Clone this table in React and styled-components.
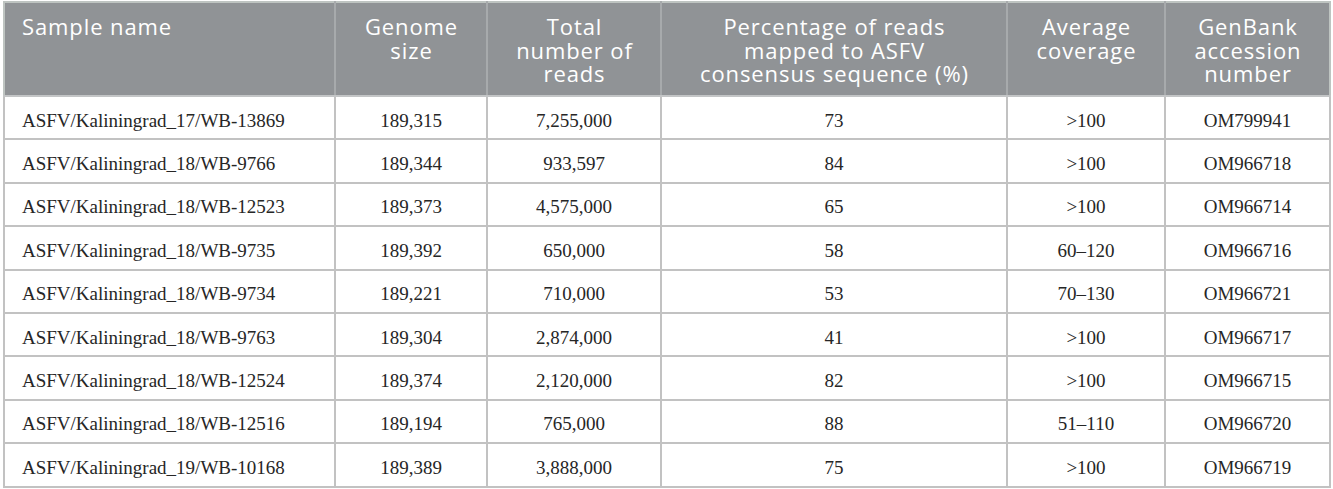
import styled, { createGlobalStyle } from 'styled-components'

const GlobalStyle = createGlobalStyle`
	html, body { margin: 0; padding: 0; background: #fff; }
`

const columns = [
	{ label: 'Sample name', width: 331, align: 'left' },
	{ label: 'Genome size', width: 152 },
	{ label: 'Total number of reads', width: 174 },
	{ label: 'Percentage of reads mapped to ASFV consensus sequence (%)', width: 346 },
	{ label: 'Average coverage', width: 158 },
	{ label: 'GenBank accession number', width: 165 },
]

const headerLines = [
	['Sample name'],
	['Genome', 'size'],
	['Total', 'number of', 'reads'],
	['Percentage of reads', 'mapped to ASFV', 'consensus sequence (%)'],
	['Average', 'coverage'],
	['GenBank', 'accession', 'number'],
]

const rows = [
	['ASFV/Kaliningrad_17/WB-13869', '189,315', '7,255,000', '73', '>100', 'OM799941'],
	['ASFV/Kaliningrad_18/WB-9766', '189,344', '933,597', '84', '>100', 'OM966718'],
	['ASFV/Kaliningrad_18/WB-12523', '189,373', '4,575,000', '65', '>100', 'OM966714'],
	['ASFV/Kaliningrad_18/WB-9735', '189,392', '650,000', '58', '60–120', 'OM966716'],
	['ASFV/Kaliningrad_18/WB-9734', '189,221', '710,000', '53', '70–130', 'OM966721'],
	['ASFV/Kaliningrad_18/WB-9763', '189,304', '2,874,000', '41', '>100', 'OM966717'],
	['ASFV/Kaliningrad_18/WB-12524', '189,374', '2,120,000', '82', '>100', 'OM966715'],
	['ASFV/Kaliningrad_18/WB-12516', '189,194', '765,000', '88', '51–110', 'OM966720'],
	['ASFV/Kaliningrad_19/WB-10168', '189,389', '3,888,000', '75', '>100', 'OM966719'],
]

export default function App () {
	return (
		<Wrap>
			<GlobalStyle />
			<Table>
				<colgroup>
					{columns.map(c => <col key={c.label} style={{ width: c.width }} />)}
				</colgroup>
				<thead>
					<tr>
						{columns.map((c, i) => (
							<Th key={c.label} $align={c.align}>
								{headerLines[i].map(line => <Line key={line}>{line}</Line>)}
							</Th>
						))}
					</tr>
				</thead>
				<tbody>
					{rows.map(row => (
						<Row key={row[0]}>
							{row.map((cell, i) => (
								<Td key={i} $align={columns[i].align}>{cell}</Td>
							))}
						</Row>
					))}
				</tbody>
			</Table>
		</Wrap>
	)
}

const Wrap = styled.div`
	padding: 1px 3px 0 3px;
`

const Table = styled.table`
	width: 1327px;
	table-layout: fixed;
	border-collapse: collapse;
	border: 2px solid #bec4c1;
`

const Th = styled.th`
	height: 94px;
	box-sizing: border-box;
	padding: 12px 16px 0 17px;
	background: #909396;
	color: #fff;
	font-family: "Open Sans", sans-serif;
	font-weight: 400;
	font-size: 22px;
	letter-spacing: 0.9px;
	line-height: 23.5px;
	text-align: ${p => p.$align || 'center'};
	vertical-align: top;
	border-right: 2px solid #a7aaac;
	border-bottom: 2px solid #c3c5c6;
	&:last-child { border-right: 2px solid #bec4c1; }
`

const Line = styled.div`
	white-space: nowrap;
`

const Row = styled.tr`
	height: 43.4px;
`

const Td = styled.td`
	padding: 6px 8px 0 ${p => p.$align ? '17px' : '8px'};
	font-family: "Liberation Serif", serif;
	font-size: 19px;
	color: #262626;
	text-align: ${p => p.$align || 'center'};
	vertical-align: middle;
	border: 2px solid #c2c2c2;
	white-space: nowrap;
`
